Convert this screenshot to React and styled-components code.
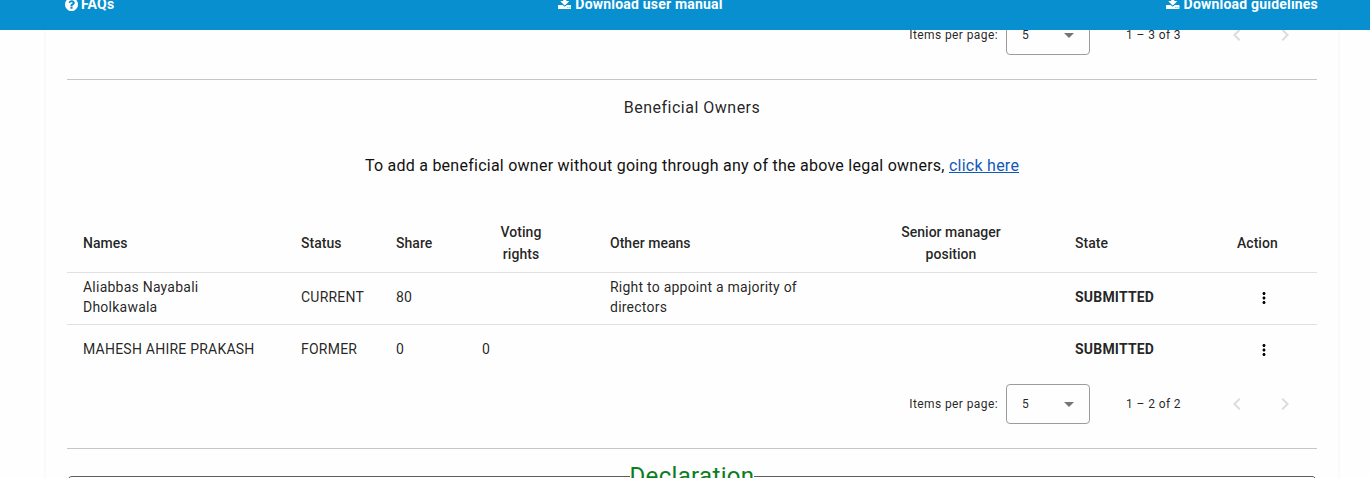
import React from "react";
import styled, { createGlobalStyle } from "styled-components";
import { MdMoreVert, MdChevronLeft, MdChevronRight } from "react-icons/md";

const GlobalStyle = createGlobalStyle`
  * { box-sizing: border-box; }
  body { margin: 0; background: #fefefe; overflow: hidden; }
`;

const Page = styled.div`
  height: 478px;
  overflow: hidden;
  font-family: Roboto, "Liberation Sans", sans-serif;
  font-size: 16px;
  color: rgba(0, 0, 0, 0.87);
  background: #fefefe;
`;

const TopBar = styled.header`
  position: relative;
  z-index: 1;
  height: 30px;
  padding: 0 52px 0 65px;
  display: flex;
  justify-content: space-between;
  align-items: flex-start;
  background: #078fd0;
`;

const TopLink = styled.a`
  display: flex;
  align-items: center;
  gap: 4px;
  height: 20px;
  margin-top: -6px;
  color: #fff;
  font-size: 14px;
  font-weight: 700;
  line-height: 20px;
  letter-spacing: 0.2px;
  white-space: nowrap;
`;

const HelpGlyph = styled.svg`
  display: block;
  width: 13px;
  height: 13px;
  margin-right: -1px;
  fill: currentColor;
`;

const DownloadGlyph = styled.svg`
  display: block;
  width: 13.5px;
  height: 12px;
  margin-bottom: 2px;
  fill: currentColor;
`;

const Card = styled.main`
  width: 1296px;
  height: 471px;
  margin: -23px auto 0 44px;
  padding: 0 21px;
  border: solid #fafafc;
  border-width: 0 2px;
`;

const Rule = styled.hr`
  width: 1250px;
  height: 1px;
  margin: 16px 0 0;
  border: 0;
  background: #c6c6c6;
`;

const Heading = styled.h2`
  margin: 16px 0 0;
  font-size: 16px;
  font-weight: 400;
  line-height: 24px;
  letter-spacing: 0.5px;
  text-align: center;
`;

const Hint = styled.p`
  margin: 34px 0 0;
  line-height: 24px;
  letter-spacing: 0.25px;
  text-align: center;
  color: #111;

  a { color: #1259b8; text-decoration: underline; }
`;

const Table = styled.table`
  width: 1250px;
  margin-top: 36px;
  table-layout: fixed;
  border-collapse: separate;
  border-spacing: 0;
`;

const HeadCell = styled.th`
  height: 59px;
  padding: 0 ${(p) => (p.$centered ? "34px" : "0")} 0 16px;
  border-bottom: 1px solid #e0e0e0;
  font-size: 14px;
  font-weight: 500;
  line-height: 22px;
  letter-spacing: 0.03px;
  text-align: ${(p) => (p.$centered ? "center" : "left")};
`;

const Cell = styled.td`
  height: ${(p) => (p.$last ? "51px" : "52px")};
  padding: 0 16px ${(p) => (p.$last ? "3px" : "4px")};
  border-bottom: ${(p) => (p.$last ? "0" : "1px solid #e0e0e0")};
  font-size: 14px;
  font-weight: ${(p) => (p.$strong ? 700 : 400)};
  line-height: 20px;
  letter-spacing: ${(p) => (p.$strong ? "0.2px" : "0.23px")};
`;

const MenuButton = styled.button`
  display: flex;
  width: 18px;
  height: 18px;
  margin: 2px 0 0 18px;
  padding: 0;
  border: 0;
  background: none;
  color: #000;
`;

const PaginatorBar = styled.div`
  display: flex;
  align-items: center;
  justify-content: flex-end;
  height: 56px;
  padding-right: 8px;
  font-size: 12px;
  line-height: 20px;
  letter-spacing: 0.4px;
`;

const SelectBox = styled.div`
  display: flex;
  align-items: center;
  justify-content: space-between;
  width: 84px;
  height: 40px;
  margin: 0 36px 0 8px;
  padding: 0 15px;
  border: 1px solid #9c9c9c;
  border-radius: 4px;
`;

const Caret = styled.span`
  border: 5px solid transparent;
  border-top-color: #757575;
  border-bottom: 0;
`;

const RangeLabel = styled.span`
  margin-right: 32px;
`;

const ArrowButton = styled.button`
  display: flex;
  align-items: center;
  justify-content: center;
  width: 48px;
  height: 48px;
  padding: 0;
  border: 0;
  background: none;
  color: #dcdcdc;
`;

const Declaration = styled.fieldset`
  height: 100px;
  margin: 11px 0 0;
  padding: 0;
  border: 1px solid #5e5e5e;
  border-radius: 5px;
  text-align: center;

  legend {
    margin: 0 auto;
    padding: 0;
    color: #0b7d1e;
    font-size: 24px;
    line-height: 32px;
    letter-spacing: 0.33px;
  }
`;

const columns = [
  { label: "Names", width: 218 },
  { label: "Status", width: 95 },
  { label: "Share", width: 86 },
  { label: "Voting rights", width: 128, centered: true },
  { label: "Other means", width: 267 },
  { label: "Senior manager position", width: 198, centered: true },
  { label: "State", width: 162 },
  { label: "Action", width: 96 },
];

const owners = [
  {
    name: "Aliabbas Nayabali Dholkawala",
    status: "CURRENT",
    share: "80",
    voting: "",
    other: "Right to appoint a majority of directors",
    state: "SUBMITTED",
  },
  {
    name: "MAHESH AHIRE PRAKASH",
    status: "FORMER",
    share: "0",
    voting: "0",
    other: "",
    state: "SUBMITTED",
  },
];

function HelpIcon() {
  return (
    <HelpGlyph viewBox="0 0 1536 1536">
      <path d="M896 1248v-192q0-14-9-23t-23-9h-192q-14 0-23 9t-9 23v192q0 14 9 23t23 9h192q14 0 23-9t9-23zm256-672q0-88-55.5-163t-138.5-116-170-41q-243 0-371 213-15 24 8 42l132 100q7 6 19 6 16 0 25-12 53-68 86-92 34-24 86-24 48 0 85.5 26t37.5 59q0 38-20 61t-68 45q-63 28-115.5 86.5t-52.5 125.5v36q0 14 9 23t23 9h192q14 0 23-9t9-23q0-19 21.5-49.5t54.5-49.5q32-18 49-28.5t46-35 44.5-48 28-60.5 12.5-81zm384 192q0 209-103 385.5t-279.5 279.5-385.5 103-385.5-103-279.5-279.5-103-385.5 103-385.5 279.5-279.5 385.5-103 385.5 103 279.5 279.5 103 385.5z" />
    </HelpGlyph>
  );
}

function DownloadIcon() {
  return (
    <DownloadGlyph viewBox="0 0 1664 1536" preserveAspectRatio="none">
      <path d="M1280 1344q0-26-19-45t-45-19-45 19-19 45 19 45 45 19 45-19 19-45zm256 0q0-26-19-45t-45-19-45 19-19 45 19 45 45 19 45-19 19-45zm128-224v320q0 40-28 68t-68 28h-1472q-40 0-68-28t-28-68v-320q0-40 28-68t68-28h465l135 136q58 56 136 56t136-56l136-136h464q40 0 68 28t28 68zm-325-569q17 41-14 70l-448 448q-18 19-45 19t-45-19l-448-448q-31-29-14-70 17-39 59-39h256v-448q0-26 19-45t45-19h256q26 0 45 19t19 45v448h256q42 0 59 39z" />
    </DownloadGlyph>
  );
}

function Paginator({ range }) {
  return (
    <PaginatorBar>
      <span>Items per page:</span>
      <SelectBox>
        <span>5</span>
        <Caret />
      </SelectBox>
      <RangeLabel>{range}</RangeLabel>
      <ArrowButton aria-label="Previous page">
        <MdChevronLeft size={24} />
      </ArrowButton>
      <ArrowButton aria-label="Next page">
        <MdChevronRight size={24} />
      </ArrowButton>
    </PaginatorBar>
  );
}

function OwnersTable() {
  return (
    <Table>
      <colgroup>
        {columns.map((c) => (
          <col key={c.label} width={c.width} />
        ))}
      </colgroup>
      <thead>
        <tr>
          {columns.map((c) => (
            <HeadCell key={c.label} $centered={c.centered}>
              {c.label}
            </HeadCell>
          ))}
        </tr>
      </thead>
      <tbody>
        {owners.map((o, i) => {
          const last = i === owners.length - 1;
          return (
            <tr key={o.name}>
              <Cell $last={last}>{o.name}</Cell>
              <Cell $last={last}>{o.status}</Cell>
              <Cell $last={last}>{o.share}</Cell>
              <Cell $last={last}>{o.voting}</Cell>
              <Cell $last={last}>{o.other}</Cell>
              <Cell $last={last} />
              <Cell $last={last} $strong>
                {o.state}
              </Cell>
              <Cell $last={last}>
                <MenuButton aria-label="Actions">
                  <MdMoreVert size={18} />
                </MenuButton>
              </Cell>
            </tr>
          );
        })}
      </tbody>
    </Table>
  );
}

export default function App() {
  return (
    <Page>
      <GlobalStyle />
      <TopBar>
        <TopLink>
          <HelpIcon />
          FAQs
        </TopLink>
        <TopLink>
          <DownloadIcon />
          Download user manual
        </TopLink>
        <TopLink>
          <DownloadIcon />
          Download guidelines
        </TopLink>
      </TopBar>
      <Card>
        <Paginator range="1 – 3 of 3" />
        <Rule />
        <Heading>Beneficial Owners</Heading>
        <Hint>
          To add a beneficial owner without going through any of the above legal owners, <a>click here</a>
        </Hint>
        <OwnersTable />
        <Paginator range="1 – 2 of 2" />
        <Rule />
        <Declaration>
          <legend>Declaration</legend>
        </Declaration>
      </Card>
    </Page>
  );
}
